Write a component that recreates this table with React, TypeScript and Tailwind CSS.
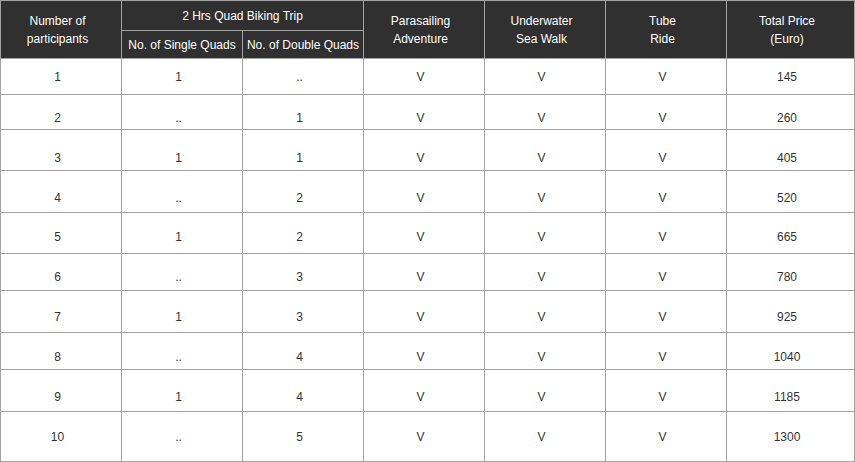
const rows = [
  { n: "1", single: "1", double: "..", price: "145", h: "h-[36px]", pt: "pt-[11px]" },
  { n: "2", single: "..", double: "1", price: "260", h: "h-[35px]", pt: "pt-[16px]" },
  { n: "3", single: "1", double: "1", price: "405", h: "h-[41px]", pt: "pt-[21px]" },
  { n: "4", single: "..", double: "2", price: "520", h: "h-[42px]", pt: "pt-[20px]" },
  { n: "5", single: "1", double: "2", price: "665", h: "h-[41px]", pt: "pt-[17px]" },
  { n: "6", single: "..", double: "3", price: "780", h: "h-[37px]", pt: "pt-[16px]" },
  { n: "7", single: "1", double: "3", price: "925", h: "h-[42px]", pt: "pt-[19px]" },
  { n: "8", single: "..", double: "4", price: "1040", h: "h-[37px]", pt: "pt-[17px]" },
  { n: "9", single: "1", double: "4", price: "1185", h: "h-[42px]", pt: "pt-[20px]" },
  { n: "10", single: "..", double: "5", price: "1300", h: "h-[50px]", pt: "pt-[18px]" },
];

const cols = "grid grid-cols-[121px_121px_121px_121px_121px_121px_128px]";

export default function App() {
  return (
    <div className="w-[855px] bg-white font-['Liberation_Sans',Arial,sans-serif] text-[12px] leading-[14px] text-[#333]">
      <div className="border-l border-t border-[#a3a3a3]">
        {/* Header */}
        <div className={`${cols} h-[58px] bg-[#303030] text-white`}>
          <div className="flex flex-col items-center justify-center pr-[7px] leading-[18px] border-r border-b border-[#a3a3a3]">
            <span>Number of</span>
            <span>participants</span>
          </div>
          <div className="col-span-2 flex flex-col">
            <div className="h-[30px] flex items-center justify-center border-r border-b border-[#a3a3a3]">
              2 Hrs Quad Biking Trip
            </div>
            <div className="flex-1 grid grid-cols-[121px_121px]">
              <div className="flex items-center justify-center border-r border-b border-[#a3a3a3]">
                No. of Single Quads
              </div>
              <div className="flex items-center justify-center border-r border-b border-[#a3a3a3]">
                No. of Double Quads
              </div>
            </div>
          </div>
          <div className="flex flex-col items-center justify-center pr-[7px] leading-[18px] border-r border-b border-[#a3a3a3]">
            <span>Parasailing</span>
            <span>Adventure</span>
          </div>
          <div className="flex flex-col items-center justify-center pr-[7px] leading-[18px] border-r border-b border-[#a3a3a3]">
            <span>Underwater</span>
            <span>Sea Walk</span>
          </div>
          <div className="flex flex-col items-center justify-center pr-[7px] leading-[18px] border-r border-b border-[#a3a3a3]">
            <span>Tube</span>
            <span>Ride</span>
          </div>
          <div className="flex flex-col items-center justify-center pr-[7px] leading-[18px] border-r border-b border-[#a3a3a3]">
            <span>Total Price</span>
            <span>(Euro)</span>
          </div>
        </div>

        {/* Body */}
        {rows.map((r) => (
          <div key={r.n} className={`${cols} ${r.h}`}>
            {[r.n, r.single, r.double, "V", "V", "V", r.price].map((v, i) => (
              <div
                key={i}
                className={`${r.pt} pr-[7px] text-center border-r border-b border-[#a3a3a3]`}
              >
                {v}
              </div>
            ))}
          </div>
        ))}
      </div>
    </div>
  );
}
